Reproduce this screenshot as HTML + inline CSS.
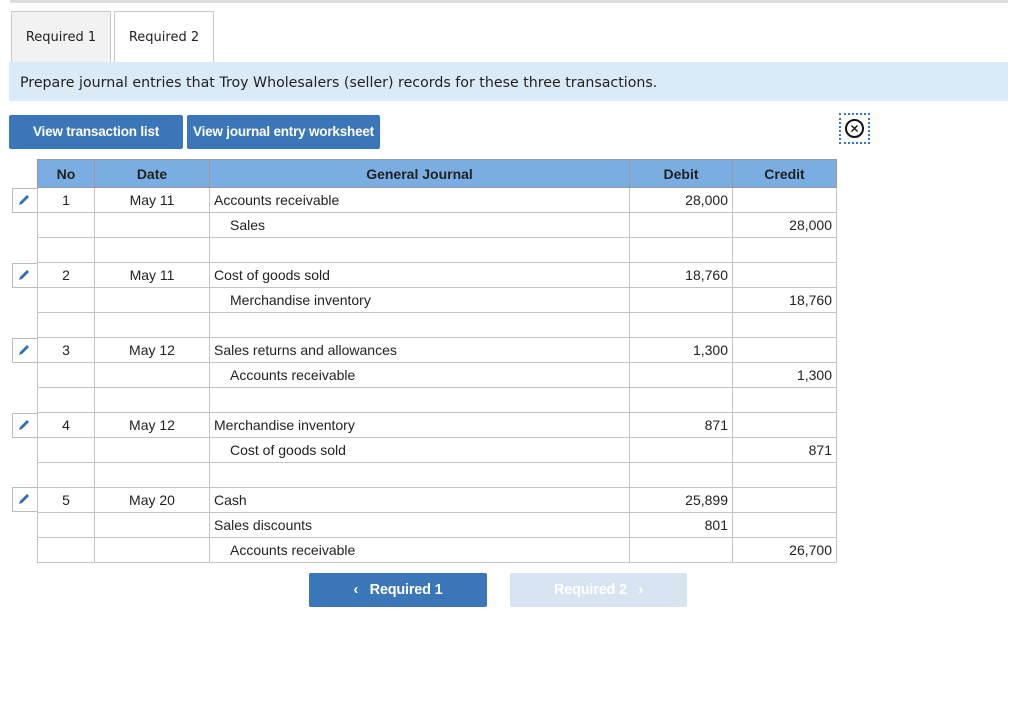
<!DOCTYPE html>
<html><head><style>
body{margin:0;width:1024px;height:716px;background:#fff;font-family:"Liberation Sans",sans-serif;position:relative;overflow:hidden}
.a{position:absolute}
.tab{position:absolute;top:11px;height:51px;width:100px;border:1px solid #c8c8c8;border-bottom:none;box-sizing:border-box;font-family:"DejaVu Sans",sans-serif;font-size:13px;line-height:52px;text-align:center;color:#222}
.btn{position:absolute;background:#3a76b8;color:#fff;font-weight:bold;font-size:13.5px;text-align:center;border-radius:2px;letter-spacing:-0.2px}
table{position:absolute;left:37px;top:159px;border-collapse:collapse;font-size:14px;color:#222;table-layout:fixed}
td,th{border:1px solid #c4c4c4;height:25px;padding:0 4px;box-sizing:border-box;line-height:22px;white-space:nowrap}
th{background:#7aaee3;font-weight:bold;height:28px;border-color:#9a9a9a}
tr{height:25px}
td.c{text-align:center}td.r{text-align:right}
.ed{position:absolute;left:12px;width:25px;height:25px;border:1px solid #bbb;border-right:none;box-sizing:border-box}
</style></head><body>
<div class="a" style="left:10px;top:0;width:998px;height:3px;background:#ddd"></div>
<div class="tab" style="left:11px;background:#f2f2f2">Required 1</div>
<div class="tab" style="left:114px;background:#fff">Required 2</div>
<div class="a" style="left:9px;top:62px;width:999px;height:39px;background:#dbeaf7;font-family:'DejaVu Sans',sans-serif;font-size:14.2px;line-height:42px;color:#222;padding-left:11px;box-sizing:border-box;white-space:nowrap">Prepare journal entries that Troy Wholesalers (seller) records for these three transactions.</div>
<div class="btn" style="left:9px;top:115px;width:174px;height:34px;line-height:34px">View transaction list</div>
<div class="btn" style="left:187px;top:115px;width:193px;height:34px;line-height:34px">View journal entry worksheet</div>
<div class="a" style="left:839px;top:113px;width:31px;height:31px;border:2px dotted #3a76b8;box-sizing:border-box"></div>
<svg class="a" style="left:844px;top:118px" width="21" height="21" viewBox="0 0 21 21"><circle cx="10.5" cy="10.5" r="8.5" fill="none" stroke="#111" stroke-width="2"/><path d="M7.5 7.5L13.5 13.5M13.5 7.5L7.5 13.5" stroke="#111" stroke-width="1.4"/></svg>
<table>
<colgroup><col style="width:57px"><col style="width:115px"><col style="width:420px"><col style="width:103px"><col style="width:104px"></colgroup>
<tr style="height:28px"><th>No</th><th>Date</th><th>General Journal</th><th>Debit</th><th>Credit</th></tr>
<tr><td class="c">1</td><td class="c">May 11</td><td>Accounts receivable</td><td class="r">28,000</td><td></td></tr>
<tr><td></td><td></td><td style="padding-left:20px">Sales</td><td></td><td class="r">28,000</td></tr>
<tr><td></td><td></td><td></td><td></td><td></td></tr>
<tr><td class="c">2</td><td class="c">May 11</td><td>Cost of goods sold</td><td class="r">18,760</td><td></td></tr>
<tr><td></td><td></td><td style="padding-left:20px">Merchandise inventory</td><td></td><td class="r">18,760</td></tr>
<tr><td></td><td></td><td></td><td></td><td></td></tr>
<tr><td class="c">3</td><td class="c">May 12</td><td>Sales returns and allowances</td><td class="r">1,300</td><td></td></tr>
<tr><td></td><td></td><td style="padding-left:20px">Accounts receivable</td><td></td><td class="r">1,300</td></tr>
<tr><td></td><td></td><td></td><td></td><td></td></tr>
<tr><td class="c">4</td><td class="c">May 12</td><td>Merchandise inventory</td><td class="r">871</td><td></td></tr>
<tr><td></td><td></td><td style="padding-left:20px">Cost of goods sold</td><td></td><td class="r">871</td></tr>
<tr><td></td><td></td><td></td><td></td><td></td></tr>
<tr><td class="c">5</td><td class="c">May 20</td><td>Cash</td><td class="r">25,899</td><td></td></tr>
<tr><td></td><td></td><td>Sales discounts</td><td class="r">801</td><td></td></tr>
<tr><td></td><td></td><td style="padding-left:20px">Accounts receivable</td><td></td><td class="r">26,700</td></tr>
</table>
<div class="ed" style="top:188px"></div><div class="ed" style="top:263px"></div><div class="ed" style="top:338px"></div><div class="ed" style="top:413px"></div><div class="ed" style="top:487px"></div>
<svg class="a" style="left:17px;top:193px" width="14" height="14"><path d="M2 12L3 9L10 2L12 4L5 11Z" fill="#2f6fb8"/></svg>
<svg class="a" style="left:17px;top:268px" width="14" height="14"><path d="M2 12L3 9L10 2L12 4L5 11Z" fill="#2f6fb8"/></svg>
<svg class="a" style="left:17px;top:343px" width="14" height="14"><path d="M2 12L3 9L10 2L12 4L5 11Z" fill="#2f6fb8"/></svg>
<svg class="a" style="left:17px;top:418px" width="14" height="14"><path d="M2 12L3 9L10 2L12 4L5 11Z" fill="#2f6fb8"/></svg>
<svg class="a" style="left:17px;top:492px" width="14" height="14"><path d="M2 12L3 9L10 2L12 4L5 11Z" fill="#2f6fb8"/></svg>
<div class="btn" style="left:309px;top:573px;width:178px;height:34px;line-height:34px;font-size:14.5px">&lsaquo;&nbsp;&nbsp;&nbsp;Required 1</div>
<div class="btn" style="left:510px;top:573px;width:177px;height:34px;line-height:34px;font-size:14.5px;background:#d8e4f1">Required 2&nbsp;&nbsp;&nbsp;&rsaquo;</div>
</body></html>
